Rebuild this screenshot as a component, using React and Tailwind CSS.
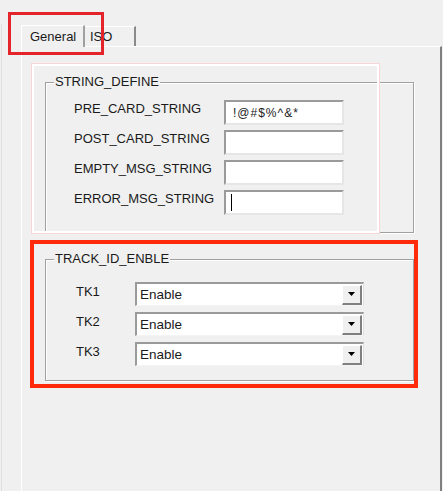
import React from 'react';

const rows = [
  { label: 'PRE_CARD_STRING', value: '!@#$%^&*' },
  { label: 'POST_CARD_STRING', value: '' },
  { label: 'EMPTY_MSG_STRING', value: '' },
  { label: 'ERROR_MSG_STRING', value: '', caret: true },
];

const tracks = ['TK1', 'TK2', 'TK3'];

function GroupBox({ title, children, className }) {
  return (
    <div className={`relative border border-[#a0a0a0] shadow-[inset_1px_1px_0_#ffffff,1px_1px_0_#ffffff] ${className}`}>
      <span className="absolute left-[8px] top-[-9px] bg-[#f0f0f0] px-[1px] leading-[16px]">
        {title}
      </span>
      {children}
    </div>
  );
}

function TextBox({ value, caret }) {
  return (
    <div className="w-[120px] h-[25px] border-t-2 border-l-2 border-t-[#9a9a9a] border-l-[#9a9a9a] border-b-2 border-r-2 border-b-[#e6e6e6] border-r-[#e6e6e6] bg-white flex items-center pl-[5px]">
      {caret && <span className="w-px h-[17px] bg-black" />}
      <span className="pl-[2px] text-[12px] tracking-[1px] text-[#222]">{value}</span>
    </div>
  );
}

function ComboBox() {
  return (
    <div className="w-[229px] h-[24px] border-t-2 border-l-2 border-t-[#9a9a9a] border-l-[#9a9a9a] border-b border-r border-b-[#f4f4f4] border-r-[#e0e0e0] bg-white flex items-center">
      <span className="flex-1 pl-[3px] text-[13.5px] leading-[16px]">Enable</span>
      <div className="w-[20px] h-[20px] mr-[1px] bg-[#f0f0f0] border-t border-l border-t-white border-l-white border-b-2 border-r-2 border-b-[#808080] border-r-[#808080] flex items-center justify-center">
        <svg width="7" height="4" viewBox="0 0 7 4">
          <polygon points="0,0 7,0 3.5,4" fill="#000" />
        </svg>
      </div>
    </div>
  );
}

export default function App() {
  return (
    <div
      className="relative w-[443px] h-[491px] overflow-hidden bg-[#f0f0f0] text-[13px] text-[#1a1a1a]"
      style={{ fontFamily: '"Liberation Sans", Arial, sans-serif' }}
    >
      <div className="pt-[24px] pl-px h-full">
        <div className="h-full border-l border-[#dedede] pl-[19px]">
          {/* tabs */}
          <div className="flex items-end h-[22px]">
            <div className="h-[22px] w-[64px] border-t border-l border-white border-r-2 border-r-[#a0a0a0] bg-[#f0f0f0] flex items-center pl-[8px] leading-[16px] relative z-10 mb-[-1px]">
              General
            </div>
            <div className="h-[20px] w-[51px] border-t border-white border-r-2 border-r-[#8a8a8a] flex items-center pl-[5px] leading-[16px]">
              ISO
            </div>
          </div>

          {/* tab page */}
          <div className="h-full w-[421px] border-t border-l border-white border-r-2 border-r-[#808080] pl-[23px] pt-[35px]">
            <GroupBox title="STRING_DEFINE" className="w-[369px] h-[151px] pt-[17px] pr-[69px]">
              <div className="flex flex-col gap-[5px]">
                {rows.map((r) => (
                  <div key={r.label} className="flex items-start justify-between pl-[28px]">
                    <span className="leading-[16px] pt-px">{r.label}</span>
                    <TextBox value={r.value} caret={r.caret} />
                  </div>
                ))}
              </div>
            </GroupBox>

            <GroupBox title="TRACK_ID_ENBLE" className="mt-[26px] w-[369px] h-[122px] pt-[22px]">
              <div className="flex flex-col gap-[6px]">
                {tracks.map((t) => (
                  <div key={t} className="flex items-start pl-[30px]">
                    <span className="w-[59px] leading-[16px] pt-[2px]">{t}</span>
                    <ComboBox />
                  </div>
                ))}
              </div>
            </GroupBox>
          </div>
        </div>
      </div>

      {/* annotation overlays */}
      <div className="pointer-events-none absolute left-[32px] top-[64px] w-[347px] h-[169px] border-2 border-white shadow-[0_0_0_1px_#f6d6d6]" />
      <div className="pointer-events-none absolute left-[8px] top-[12px] w-[96px] h-[43px] border-[3px] border-[#e3242b]" />
      <div className="pointer-events-none absolute left-[30px] top-[240px] w-[388px] h-[148px] border-4 border-[#ff2a0a]" />
    </div>
  );
}
